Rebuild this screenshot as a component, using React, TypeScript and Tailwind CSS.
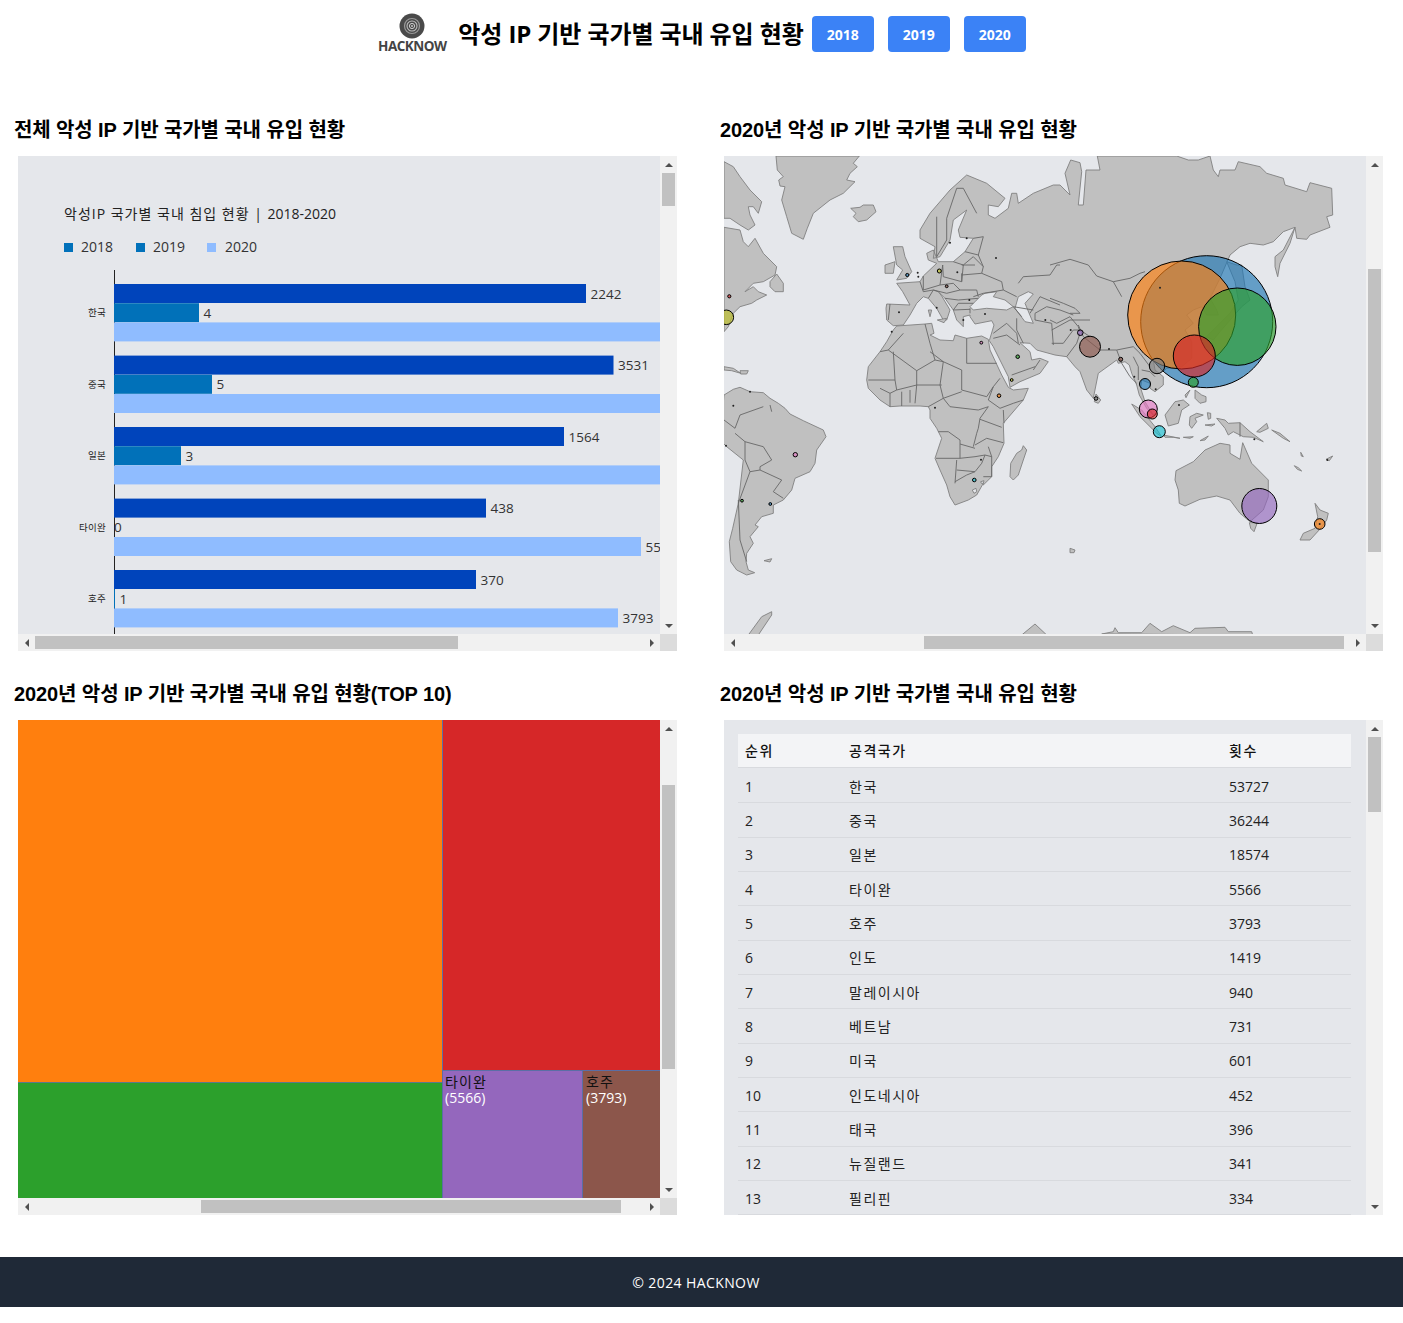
import React from 'react'

type Origin = [number, number]

// zoom-space origins used while tracing the map (1 unit = 1/3 px)
const Z3: Origin = [720, 150]
const Z4: Origin = [1050, 150]
const Z5: Origin = [720, 400]
const Z6: Origin = [1050, 400]
const Z11: Origin = [860, 300]
const Z12: Origin = [1100, 330]

const pts = (o: Origin, s: string) =>
  s
    .trim()
    .split(/\s+/)
    .map((p) => {
      const [x, y] = p.split(',').map(Number)
      return `${(o[0] + x / 3).toFixed(1)},${(o[1] + y / 3).toFixed(1)}`
    })
    .join(' ')

const LAND = [
  // eurasia
  [
    pts(Z3, '500,462 570,465 548,425 530,400 600,395 610,378 650,340 625,330 620,310 640,300 655,335 700,335 735,305 760,265 720,262 715,240 740,180 700,210 690,270 660,320 640,325 645,290 600,265 600,240 630,190 690,120 740,75 800,100 855,145 835,170 805,165 805,195 825,205 865,175 875,130 890,130 895,160 940,130 1000,105 1020,105'),
    pts(Z4, '60,135 45,70 62,30 90,38 95,65 85,165 100,165 108,60 150,60 142,18 380,18 415,30 445,30 480,18 490,60 505,80 510,60 555,60 565,35 630,50 650,70 700,85 705,105 770,125 780,98 845,115 848,195 830,200 840,232 780,255 770,268 740,265 735,232 700,245 670,275 640,285 600,280 570,290 540,315 510,385 480,445 500,480 505,495 470,495 455,470 430,480 410,495 430,520 405,540 425,575 425,625 395,650 350,655 340,665'),
    pts(Z12, '160,90 165,120 190,140 190,165 165,185 150,175 150,160 125,150 122,175 135,215 150,240 160,255 140,235 118,195 110,165 95,130 88,105 75,95 55,100'),
    pts(Z11, '770,180 715,220 700,295 680,270 660,215 645,200 620,170 585,165 530,150 510,130 480,128 510,155 515,180 540,175 565,185 540,220 480,245 450,262 445,230 400,140 388,122 402,75 395,62 345,72 330,50'),
    pts(Z3, '750,495 730,500 730,530 710,510 700,480 675,445 655,425 665,438 690,480 680,510 670,510 650,475 625,445 610,440 590,460 570,495 550,525 520,527 500,510 498,475'),
  ].join(' '),
  // africa
  [
    pts(Z11, '110,78 195,72 215,70 222,100 210,105 240,120 280,122 285,105 320,115 365,108 385,118 390,150 425,225 445,262 460,270 505,265 490,300 430,370 432,430 415,470 395,500 395,530 370,555'),
    pts(Z5, '790,250 770,285 745,300 705,315 690,290 680,255 660,210 645,175 665,115 650,85 630,55 630,30'),
    pts(Z11, '205,320 180,318 120,318 90,320 60,300 25,265 20,240 25,200 60,155 80,125 100,90'),
  ].join(' '),
  pts(Z11, '490,437 500,450 490,480 475,525 460,540 450,530 452,490 470,460 485,450'),
  // greenland, iceland, britain
  pts(Z3, '168,18 172,60 190,80 176,90 180,108 195,110 185,150 200,200 215,250 250,268 262,235 280,190 330,150 370,130 405,95 380,90 390,70 412,50 400,40 418,18'),
  pts(Z3, '392,175 420,172 430,165 460,165 468,185 440,210 415,215 400,200 408,190'),
  pts(Z3, '520,290 548,290 555,320 575,365 560,385 530,390 548,360 530,345'),
  pts(Z3, '495,345 525,335 520,370 495,370'),
  pts(Z3, '625,480 635,480 630,500'),
  pts(Z3, '652,510 680,505 672,518'),
  // north america
  pts(Z3, '12,35 40,50 60,80 90,120 125,155 115,190 100,170 85,170 90,195 105,225 85,240 60,225 30,205 12,205'),
  pts(Z3, '12,232 60,240 70,275 85,290 105,265 130,310 170,350 165,375 130,395 100,400 75,425 100,410 115,425 140,435 110,450 95,460 60,470 40,490 25,530 12,545'),
  pts(Z3, '150,395 170,372 190,400 190,425 165,425 150,410'),
  pts(Z3, '12,650 40,655 62,670 35,662 12,660'),
  pts(Z3, '60,662 85,662 80,672 62,672'),
  // south america
  [
    pts(Z3, '12,735 40,718 60,712 90,725 130,728 150,745'),
    pts(Z5, '175,10 195,25 210,42 250,62 310,90 318,110 290,150 285,190 270,215 225,235 215,270 190,300 160,315 160,340 125,350 105,375 115,380 90,410 100,430 80,460 78,485 85,510 104,518 80,525 50,510 32,485 28,425 38,385 55,310 70,180 20,140 0,120'),
  ].join(' '),
  pts(Z5, '132,482 155,476 150,486'),
  // south east asia and oceania
  pts(Z11, '708,282 722,300 715,310 703,305'),
  pts(Z4, '530,335 560,345 575,345 585,410 600,450 575,470 510,545 490,570 470,560 540,490 565,450 555,395'),
  pts(Z4, '675,320 700,300 735,232 720,280 690,340 683,380 675,350'),
  pts(Z12, '95,222 125,240 165,290 185,320 170,310 120,260'),
  pts(Z12, '190,315 240,325 220,322 195,322'),
  pts(Z12, '250,322 280,320 270,325'),
  pts(Z12, '300,332 325,318 315,330'),
  pts(Z12, '315,285 345,282 335,288'),
  pts(Z12, '195,255 225,215 250,210 268,225 245,240 235,280 205,288'),
  pts(Z12, '270,260 290,250 310,255 285,265 290,275 275,295 268,285'),
  pts(Z12, '350,265 375,270 385,280 420,278 450,305 490,335 460,322 430,320 400,305 385,315 375,295'),
  pts(Z12, '285,180 305,195 318,200 318,215 300,220 285,205'),
  pts(Z12, '255,195 270,180 258,203'),
  pts(Z12, '322,248 332,250 332,265 325,268'),
  pts(Z6, '620,95 650,70 655,85 630,97'),
  pts(Z6, '665,90 690,100 720,125 700,115'),
  pts(Z6, '378,212 430,185 465,150 510,130 540,135 540,160 570,178 578,128 605,190 655,240 655,290 640,330 600,365 570,340 540,300 500,288 450,298 405,318 388,310 385,270 375,240'),
  pts(Z6, '598,368 622,368 612,395 602,385'),
  pts(Z6, '795,310 810,330 835,340 830,360 812,385 780,420 750,420 760,400 795,385 803,350'),
  pts(Z6, '733,197 745,203 755,213 742,208'),
  pts(Z6, '752,157 760,170 754,168'),
  pts(Z6, '828,178 848,168 838,182'),
  pts(Z6, '60,445 75,450 72,458 60,458'),
  // antarctica
  pts(Z6, '155,702 190,695 195,683 205,698 275,698 300,670 335,695 370,677 420,698 435,685 525,682 535,695 605,695 608,705'),
  pts(Z5, '85,705 125,650 155,635 155,645 115,705'),
  pts(Z5, '905,705 945,672 980,705'),
]

const SEAS = [
  pts(Z3, '765,455 785,435 795,430 830,425 820,440 855,450 880,470 860,480 800,475 760,480 750,470'),
  pts(Z3, '895,440 925,425 940,432 915,460 940,520 915,515 885,475'),
  pts(Z5, '757,270 768,265 770,275 762,280'),
  pts(Z5, '782,245 792,242 790,250 784,250'),
]

const BORDERS = [
  // africa
  pts(Z11, '130,100 85,150 170,212 225,180 250,185'),
  pts(Z11, '85,150 60,155'),
  pts(Z11, '100,155 105,240 25,240'),
  pts(Z11, '195,72 210,130 225,180'),
  pts(Z11, '320,115 320,190 410,190'),
  pts(Z11, '210,155 250,185 305,210 305,270 380,290 400,260 420,235'),
  pts(Z11, '250,185 240,255 250,295 305,275'),
  pts(Z11, '170,212 170,255 245,255'),
  pts(Z11, '105,240 110,270 170,255 165,310'),
  pts(Z11, '250,295 205,320'),
  pts(Z11, '400,260 385,300 420,325 460,310 490,300'),
  pts(Z11, '250,295 270,320 355,330 385,320 360,355 355,385 350,400 340,440'),
  pts(Z11, '430,330 432,370'),
  pts(Z11, '360,358 425,382'),
  pts(Z11, '345,435 380,415 430,428'),
  pts(Z11, '235,395 265,395 300,420 300,475 228,475'),
  pts(Z11, '300,432 345,445'),
  pts(Z11, '300,475 345,470 375,465'),
  pts(Z11, '290,480 285,550'),
  pts(Z11, '290,510 345,515'),
  pts(Z11, '285,545 320,525 345,515 365,490 375,465 395,470 395,530 370,530'),
  pts(Z11, '385,440 395,470'),
  pts(Z11, '110,270 90,280 90,320'),
  pts(Z11, '125,275 125,318'),
  pts(Z11, '150,270 150,308'),
  pts(Z11, '60,265 90,280'),
  // south america
  pts(Z5, '45,100 75,125 75,180 90,215 120,210 185,240 160,275 190,295'),
  pts(Z5, '75,125 130,140 155,180 120,200 120,210'),
  pts(Z5, '55,300 60,420 80,485'),
  pts(Z5, '90,215 55,310'),
  pts(Z5, '12,60 45,85 60,45 130,20'),
  pts(Z5, '150,15 155,35'),
  // europe
  pts(Z3, '600,395 610,425 640,420 655,425'),
  pts(Z3, '610,378 610,420 660,405 668,345'),
  pts(Z3, '668,345 670,380 725,395 730,345 700,335'),
  pts(Z3, '735,305 775,315'),
  pts(Z3, '725,345 765,345'),
  pts(Z3, '730,345 760,320 790,350 785,370 725,375'),
  pts(Z3, '725,395 725,370'),
  pts(Z3, '785,370 845,395 850,420 790,430 760,440'),
  pts(Z3, '660,405 700,400 720,420 770,420 775,440'),
  pts(Z3, '680,430 720,420'),
  pts(Z3, '675,445 715,450 775,445'),
  pts(Z3, '700,480 715,460 760,460'),
  pts(Z3, '760,265 790,260 775,315 790,350'),
  pts(Z3, '850,420 890,440'),
  pts(Z3, '770,190 730,115 710,115'),
  pts(Z3, '650,200 650,320 680,270 680,205 710,115'),
  pts(Z3, '750,490 750,475'),
  pts(Z3, '880,470 905,500'),
  pts(Z3, '895,400 910,380 990,375 1010,345 1020,345'),
  pts(Z3, '930,490 960,440 1020,465'),
  pts(Z3, '510,462 505,510'),
  pts(Z3, '625,445 640,420 680,430'),
  pts(Z3, '700,480 750,478'),
  pts(Z3, '880,470 940,480'),
  // middle east
  pts(Z11, '470,55 470,90 490,130'),
  pts(Z11, '525,40 525,60 575,70 580,135'),
  pts(Z11, '525,40 560,20 600,30 640,45'),
  pts(Z11, '400,100 440,70 470,100 475,130'),
  pts(Z11, '400,115 440,105 480,135'),
  pts(Z11, '455,225 525,200'),
  pts(Z11, '540,180 520,210'),
  pts(Z11, '575,90 630,60 690,60'),
  pts(Z11, '575,130 610,130 640,90 660,90 690,110'),
  pts(Z11, '620,170 650,130 660,100'),
  // asia
  pts(Z4, '0,345 60,328 115,345 140,378 190,395 215,440'),
  pts(Z4, '190,395 240,385 270,370 285,365'),
  pts(Z4, '0,445 40,460 75,475 90,490 60,490'),
  pts(Z4, '0,510 20,520 60,500 85,530 90,545'),
  pts(Z4, '85,525 100,560 150,600 200,600 250,590 270,610'),
  pts(Z4, '200,600 215,640 240,680 260,700'),
  pts(Z4, '270,610 300,650'),
  pts(Z12, '100,80 115,110 115,150'),
  pts(Z12, '125,120 150,125 165,140'),
  pts(Z12, '420,278 420,320'),
]

type Bubble = { x: number; y: number; r: number; c: string }

const BUBBLES: Bubble[] = [
  { x: 1206.7, y: 321.7, r: 66, c: '#1f77b4' },
  { x: 1181.7, y: 315, r: 54, c: '#ff7f0e' },
  { x: 1237.3, y: 326.7, r: 38.7, c: '#2ca02c' },
  { x: 1194.3, y: 356, r: 21, c: '#d62728' },
  { x: 1259.3, y: 506, r: 17.5, c: '#9467bd' },
  { x: 1090, y: 346.7, r: 10.5, c: '#8c564b' },
  { x: 1148.3, y: 409, r: 9, c: '#e377c2' },
  { x: 1157, y: 366, r: 7.7, c: '#7f7f7f' },
  { x: 726.3, y: 317.3, r: 7.3, c: '#bcbd22' },
  { x: 1159.3, y: 431.7, r: 6, c: '#17becf' },
  { x: 1152.3, y: 414, r: 5, c: '#d62728' },
  { x: 1193.3, y: 382.3, r: 5, c: '#2ca02c' },
  { x: 1145, y: 384, r: 5.5, c: '#1f77b4' },
  { x: 1319.7, y: 524, r: 5.3, c: '#ff7f0e' },
  { x: 1080.3, y: 332.7, r: 2.8, c: '#9467bd' },
  { x: 795.3, y: 454.7, r: 2.2, c: '#e377c2' },
  { x: 729.3, y: 296.3, r: 1.6, c: '#d62728' },
  { x: 907.3, y: 275, r: 1.6, c: '#1f77b4' },
  { x: 939.3, y: 271, r: 2, c: '#bcbd22' },
  { x: 946.7, y: 286.3, r: 1.4, c: '#8c564b' },
  { x: 981.3, y: 342.7, r: 1.4, c: '#e377c2' },
  { x: 1017.7, y: 356.7, r: 1.8, c: '#2ca02c' },
  { x: 1011.7, y: 380, r: 1.4, c: '#bcbd22' },
  { x: 999, y: 395.7, r: 1.8, c: '#ff7f0e' },
  { x: 1120.7, y: 359.3, r: 2, c: '#8c564b' },
  { x: 1096, y: 398.5, r: 1.8, c: '#7f7f7f' },
  { x: 974.3, y: 480, r: 1.8, c: '#17becf' },
  { x: 742, y: 500.7, r: 1.4, c: '#2ca02c' },
  { x: 770.3, y: 504, r: 1.4, c: '#1f77b4' },
]

const DOTS: Origin[] = [
  [918.3, 276.7], [917.7, 272.7], [957.3, 272.3], [996, 258], [950, 242.7], [966.7, 238.3], [899, 312.3], [891.7, 331.7],
  [936.7, 307.7], [963.3, 320], [969.3, 300], [985, 314], [1045.3, 320], [750, 391.7], [733.3, 405.7], [726, 445.7],
  [935, 407.7], [981, 459.7], [1160, 287.7], [1070.7, 330], [1109, 349], [1134.3, 376.7], [1155.7, 389.3],
  [1179, 405], [1254.3, 439.3], [1327.3, 460], [1319.7, 524],
]

const Chart = () => {
  const groups = [
    { name: '한국', y: 284, a: 586, av: '2242', b: 199, bv: '4', c: 680, cv: '' },
    { name: '중국', y: 355.6, a: 613.5, av: '3531', b: 212, bv: '5', c: 680, cv: '' },
    { name: '일본', y: 427, a: 564, av: '1564', b: 181, bv: '3', c: 680, cv: '' },
    { name: '타이완', y: 498.6, a: 486, av: '438', b: 114, bv: '0', c: 641, cv: '5566' },
    { name: '호주', y: 570, a: 476, av: '370', b: 115, bv: '1', c: 618, cv: '3793' },
  ]
  return (
    <svg viewBox="18 156 642 478" className="block w-full h-full">
      <text x="64" y="218.5" fontSize="14" fill="#222">
        <tspan letterSpacing="1">악성IP 국가별 국내 침입 현황 | </tspan>
        <tspan>2018-2020</tspan>
      </text>
      <rect x="64" y="243" width="9" height="9" fill="#0171ba" />
      <text x="81" y="252" fontSize="14" fill="#333">2018</text>
      <rect x="136" y="243" width="9" height="9" fill="#0171ba" />
      <text x="153" y="252" fontSize="14" fill="#333">2019</text>
      <rect x="207" y="243" width="9" height="9" fill="#8fbcff" />
      <text x="225" y="252" fontSize="14" fill="#333">2020</text>
      <line x1="114.5" y1="270" x2="114.5" y2="634" stroke="#222" />
      {groups.map((g) => (
        <g key={g.name}>
          <rect x="114" y={g.y} width={g.a - 114} height="19" fill="#0044bb" />
          <rect x="114" y={g.y + 19.2} width={g.b - 114} height="19" fill="#0171b9" />
          <rect x="114" y={g.y + 38.4} width={g.c - 114} height="19" fill="#8fbcff" />
          <text x="106" y={g.y + 32} fontSize="9.5" textAnchor="end" letterSpacing="0.3" fill="#222">{g.name}</text>
          <text x={g.a + 4.5} y={g.y + 14.5} fontSize="13.5" fill="#333">{g.av}</text>
          <text x={g.b === 114 ? 114 : g.b + 4.5} y={g.y + 33.7} fontSize="13.5" fill="#333">{g.bv}</text>
          {g.cv && <text x={g.c + 4.5} y={g.y + 52.9} fontSize="13.5" fill="#333">{g.cv}</text>}
        </g>
      ))}
    </svg>
  )
}

const WorldMap = () => (
  <svg viewBox="724 156 642 478" className="block w-full h-full">
    <g fill="#c0c0c0" stroke="#808080" strokeWidth="0.9" strokeLinejoin="round">
      {LAND.map((p, i) => (
        <polygon key={i} points={p} />
      ))}
    </g>
    <g fill="#e5e7eb" stroke="#808080" strokeWidth="0.9">
      {SEAS.map((p, i) => (
        <polygon key={i} points={p} />
      ))}
    </g>
    <g fill="none" stroke="#666" strokeWidth="0.9" strokeLinejoin="round">
      {BORDERS.map((p, i) => (
        <polyline key={i} points={p} />
      ))}
    </g>
    {BUBBLES.map((b, i) => (
      <circle key={i} cx={b.x} cy={b.y} r={b.r} fill={b.c} fillOpacity="0.65" stroke="#000" strokeWidth="1" />
    ))}
    {DOTS.map(([x, y], i) => (
      <circle key={i} cx={x} cy={y} r="1" fill="#222" />
    ))}
  </svg>
)

const Treemap = () => (
  <div className="flex w-full h-full">
    <div className="flex flex-col w-[424px]">
      <div className="h-[362px] bg-[#ff7f0e]" />
      <div className="flex-1 bg-[#2ca02c] border-t border-[#5a7a8a]" />
    </div>
    <div className="flex flex-col flex-1 border-l border-[#5a6ea5]">
      <div className="h-[350px] bg-[#d62728]" />
      <div className="flex flex-1 border-t border-[#5a6ea5]">
        <div className="w-[140px] bg-[#9467bd] border-r border-[#5a6ea5] pl-[2px] pt-[3px] text-sm leading-4">
          <div className="text-[#111] tracking-[1.1px]">타이완</div>
          <div className="text-white">(5566)</div>
        </div>
        <div className="flex-1 bg-[#8c564b] pl-[3px] pt-[3px] text-sm leading-4">
          <div className="text-[#111] tracking-[1.1px]">호주</div>
          <div className="text-white">(3793)</div>
        </div>
      </div>
    </div>
  </div>
)

const RANKS = [
  ['1', '한국', '53727'],
  ['2', '중국', '36244'],
  ['3', '일본', '18574'],
  ['4', '타이완', '5566'],
  ['5', '호주', '3793'],
  ['6', '인도', '1419'],
  ['7', '말레이시아', '940'],
  ['8', '베트남', '731'],
  ['9', '미국', '601'],
  ['10', '인도네시아', '452'],
  ['11', '태국', '396'],
  ['12', '뉴질랜드', '341'],
  ['13', '필리핀', '334'],
]

const RankTable = () => (
  <div className="pt-[14px] pl-[14px] w-[627px] text-sm text-[#222]">
    <div className="grid grid-cols-[104px_380px_1fr] h-[34px] items-center pl-[7px] bg-[#f3f4f6] border-b border-[#d8dade] font-medium text-[#111] tracking-[1.5px]">
      <span>순위</span>
      <span>공격국가</span>
      <span>횟수</span>
    </div>
    <div className="pt-px">
      {RANKS.map(([rank, name, count]) => (
        <div key={rank} className="grid grid-cols-[104px_380px_1fr] h-[34.35px] items-center pl-[7px] pt-[2px] border-b border-[#d8dade]">
          <span>{rank}</span>
          <span className="tracking-[1.5px]">{name}</span>
          <span>{count}</span>
        </div>
      ))}
    </div>
  </div>
)

const Arrow = ({ dir }: { dir: 'up' | 'down' | 'left' | 'right' }) => {
  const shape = {
    up: '0,4 8,4 4,0',
    down: '0,0 8,0 4,4',
    left: '4,0 4,8 0,4',
    right: '0,0 0,8 4,4',
  }[dir]
  const vertical = dir === 'up' || dir === 'down'
  return (
    <div className="w-[17px] h-[17px] shrink-0 flex items-center justify-center">
      <svg width={vertical ? 8 : 4} height={vertical ? 4 : 8} viewBox={vertical ? '0 0 8 4' : '0 0 4 8'}>
        <polygon points={shape} fill="#505050" />
      </svg>
    </div>
  )
}

const VBar = ({ offset, size }: { offset: number; size: number }) => (
  <div className="w-[17px] bg-[#f1f1f1] flex flex-col items-center">
    <Arrow dir="up" />
    <div className="flex-1 w-full px-[2px]">
      <div className="bg-[#c1c1c1] w-full" style={{ marginTop: offset, height: size }} />
    </div>
    <Arrow dir="down" />
  </div>
)

const HBar = ({ offset, size }: { offset: number; size: number }) => (
  <div className="h-[17px] bg-[#f1f1f1] flex items-center">
    <Arrow dir="left" />
    <div className="flex-1 h-full py-[2px]">
      <div className="bg-[#c1c1c1] h-full" style={{ marginLeft: offset, width: size }} />
    </div>
    <Arrow dir="right" />
  </div>
)

type PanelProps = {
  title: string
  v: [number, number]
  h?: [number, number]
  children: React.ReactNode
}

const Panel = ({ title, v, h, children }: PanelProps) => (
  <section className="w-[706px]">
    <h2 className="pt-px h-7 text-xl leading-7 font-semibold text-black mb-[13px] whitespace-nowrap font-['Liberation_Sans','Noto_Sans_CJK_KR',sans-serif] tracking-[-0.1px]">{title}</h2>
    <div className="ml-1 w-[659px] h-[495px] grid grid-cols-[642px_17px] grid-rows-[1fr_auto]">
      <div className="bg-[#e5e7eb] overflow-hidden min-h-0">{children}</div>
      <VBar offset={v[0]} size={v[1]} />
      {h && <HBar offset={h[0]} size={h[1]} />}
      {h && <div className="bg-[#dcdcdc]" />}
    </div>
  </section>
)

const Logo = () => (
  <div className="flex flex-col items-center w-[70px]">
    <svg width="26" height="26" viewBox="0 0 26 26">
      <circle cx="13" cy="13" r="12.5" fill="#4a4a4a" />
      <circle cx="13" cy="13" r="7.5" fill="none" stroke="#9a9a9a" strokeWidth="1.2" />
      <circle cx="13" cy="13" r="5" fill="none" stroke="#bdbdbd" strokeWidth="1.1" />
      <circle cx="13" cy="13" r="2.6" fill="none" stroke="#cfcfcf" strokeWidth="1" />
      <circle cx="13" cy="13" r="0.9" fill="#cfcfcf" />
    </svg>
    <span className="text-[13.5px] leading-[15px] font-bold text-[#444] tracking-[-0.5px] whitespace-nowrap">HACKNOW</span>
  </div>
)

export default function App() {
  return (
    <div className="bg-white font-['Open_Sans','Noto_Sans_CJK_KR',sans-serif]">
      <header className="h-[115px] flex justify-center items-start pt-[13px]">
        <Logo />
        <h1 className="ml-[11px] text-2xl leading-[42px] font-bold text-black whitespace-nowrap tracking-[-0.1px]">악성 IP 기반 국가별 국내 유입 현황</h1>
        <div className="ml-2 mt-[3px] flex gap-[14px]">
          {['2018', '2019', '2020'].map((y) => (
            <button key={y} className="h-9 w-[62px] pt-px rounded bg-[#3b82f6] text-white text-sm font-bold">
              {y}
            </button>
          ))}
        </div>
      </header>

      <main className="pl-[14px] grid grid-cols-2 w-[1426px] gap-y-[28px]">
        <Panel title="전체 악성 IP 기반 국가별 국내 유입 현황" v={[0, 33]} h={[0, 423]}>
          <Chart />
        </Panel>
        <Panel title="2020년 악성 IP 기반 국가별 국내 유입 현황" v={[96, 283]} h={[183, 420]}>
          <WorldMap />
        </Panel>
        <Panel title="2020년 악성 IP 기반 국가별 국내 유입 현황(TOP 10)" v={[48, 284]} h={[166, 420]}>
          <Treemap />
        </Panel>
        <Panel title="2020년 악성 IP 기반 국가별 국내 유입 현황" v={[0, 75]}>
          <RankTable />
        </Panel>
      </main>

      <footer className="mt-[42px] mb-4 h-[50px] pt-[2px] pr-[11px] bg-[#1f2937] flex items-center justify-center text-sm tracking-[0.4px] text-white">
        © 2024 HACKNOW
      </footer>
    </div>
  )
}
